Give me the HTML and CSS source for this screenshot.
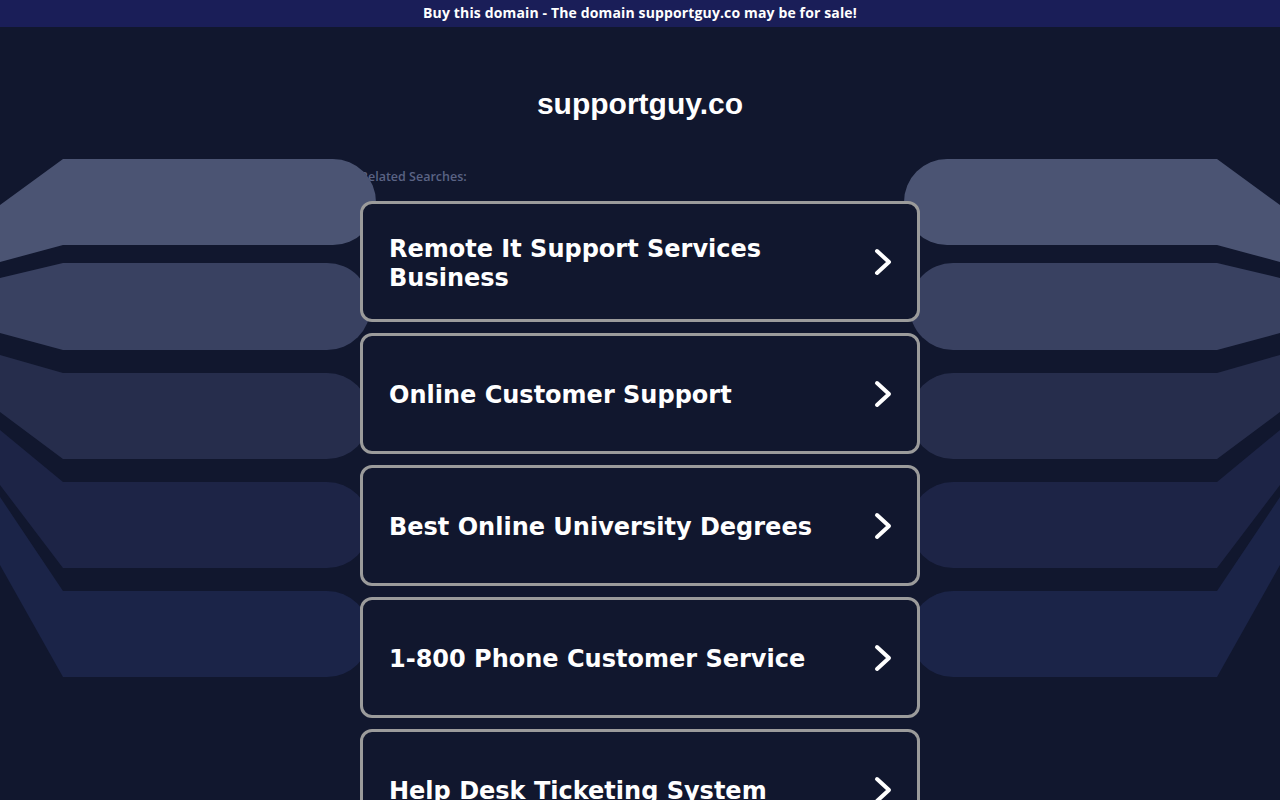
FILE: index.html
```html
<!DOCTYPE html>
<html lang="en">
<head>
<meta charset="utf-8">
<title>supportguy.co</title>
<link rel="stylesheet" href="styles.css">
</head>
<body>
<svg class="bg" width="1280" height="800" viewBox="0 0 1280 800" aria-hidden="true">
  <g class="left">
    <path fill="#4b5473" d="M0,205 L63,159 L333,159 A43,43 0 0 1 333,245 L63,245 L0,262 Z"/>
    <path fill="#394161" d="M0,278 L63,263 L327,263 A43.5,43.5 0 0 1 327,350 L63,350 L0,333 Z"/>
    <path fill="#262d4c" d="M0,355 L63,373 L327,373 A43,43 0 0 1 327,459 L63,459 L0,412 Z"/>
    <path fill="#1d2446" d="M0,430 L63,482 L327,482 A43,43 0 0 1 327,568 L63,568 L0,485 Z"/>
    <path fill="#1b2448" d="M0,497 L63,591 L327,591 A43,43 0 0 1 327,677 L63,677 L0,565 Z"/>
  </g>
  <g transform="translate(1280,0) scale(-1,1)">
    <path fill="#4b5473" d="M0,205 L63,159 L333,159 A43,43 0 0 1 333,245 L63,245 L0,262 Z"/>
    <path fill="#394161" d="M0,278 L63,263 L327,263 A43.5,43.5 0 0 1 327,350 L63,350 L0,333 Z"/>
    <path fill="#262d4c" d="M0,355 L63,373 L327,373 A43,43 0 0 1 327,459 L63,459 L0,412 Z"/>
    <path fill="#1d2446" d="M0,430 L63,482 L327,482 A43,43 0 0 1 327,568 L63,568 L0,485 Z"/>
    <path fill="#1b2448" d="M0,497 L63,591 L327,591 A43,43 0 0 1 327,677 L63,677 L0,565 Z"/>
  </g>
</svg>
<div class="topbar">Buy this domain - The domain supportguy.co may be for sale!</div>
<main class="main">
  <h1 class="title">supportguy.co</h1>
  <div class="related">Related Searches:</div>
  <a class="card" href="#"><span class="card-text">Remote It Support Services Business</span><svg class="chev" width="20" height="28" viewBox="0 0 20 28"><polyline points="4,3 16,14 4,25"/></svg></a>
  <a class="card" href="#"><span class="card-text">Online Customer Support</span><svg class="chev" width="20" height="28" viewBox="0 0 20 28"><polyline points="4,3 16,14 4,25"/></svg></a>
  <a class="card" href="#"><span class="card-text">Best Online University Degrees</span><svg class="chev" width="20" height="28" viewBox="0 0 20 28"><polyline points="4,3 16,14 4,25"/></svg></a>
  <a class="card" href="#"><span class="card-text">1-800 Phone Customer Service</span><svg class="chev" width="20" height="28" viewBox="0 0 20 28"><polyline points="4,3 16,14 4,25"/></svg></a>
  <a class="card" href="#"><span class="card-text">Help Desk Ticketing System</span><svg class="chev" width="20" height="28" viewBox="0 0 20 28"><polyline points="4,3 16,14 4,25"/></svg></a>
</main>
</body>
</html>
```
FILE: styles.css
```css
html, body {
  margin: 0;
  padding: 0;
}
body {
  background: #11172e;
  position: relative;
  min-height: 800px;
  overflow: hidden;
  font-family: "Liberation Sans", Arial, sans-serif;
}
.bg {
  position: absolute;
  top: 0;
  left: 0;
  z-index: 0;
  pointer-events: none;
}
.topbar {
  position: relative;
  z-index: 1;
  height: 27px;
  line-height: 26px;
  background: #1a1e58;
  color: #ffffff;
  text-align: center;
  font-family: "Open Sans", sans-serif;
  font-weight: 700;
  font-size: 14px;
  letter-spacing: 0.14px;
}
.main {
  width: 560px;
  margin: 0 auto;
}
.title {
  position: relative;
  z-index: 1;
  margin: 59px 0 0 0;
  font-family: "Liberation Sans", Arial, sans-serif;
  font-weight: 700;
  font-size: 30px;
  line-height: 36px;
  color: #ffffff;
  text-align: center;
}
.related {
  margin-top: 47px;
  margin-bottom: 16px;
  font-family: "Open Sans", sans-serif;
  font-weight: 600;
  font-size: 12.5px;
  line-height: 16px;
  color: #5a6384;
}
.card {
  position: relative;
  z-index: 1;
  box-sizing: border-box;
  height: 121px;
  margin-bottom: 11px;
  border: 3px solid #9b9b9b;
  border-radius: 12px;
  background: #11172e;
  padding: 0 26px;
  display: flex;
  align-items: center;
  justify-content: space-between;
  gap: 20px;
  text-decoration: none;
  color: #ffffff;
}
.card-text {
  font-family: "DejaVu Sans", Verdana, sans-serif;
  font-weight: 700;
  font-size: 24px;
  line-height: 29px;
  padding-top: 4px;
}
.chev {
  flex: none;
  margin-right: -2px;
}
.chev polyline {
  fill: none;
  stroke: #ffffff;
  stroke-width: 4;
  stroke-linecap: round;
  stroke-linejoin: round;
}
```
